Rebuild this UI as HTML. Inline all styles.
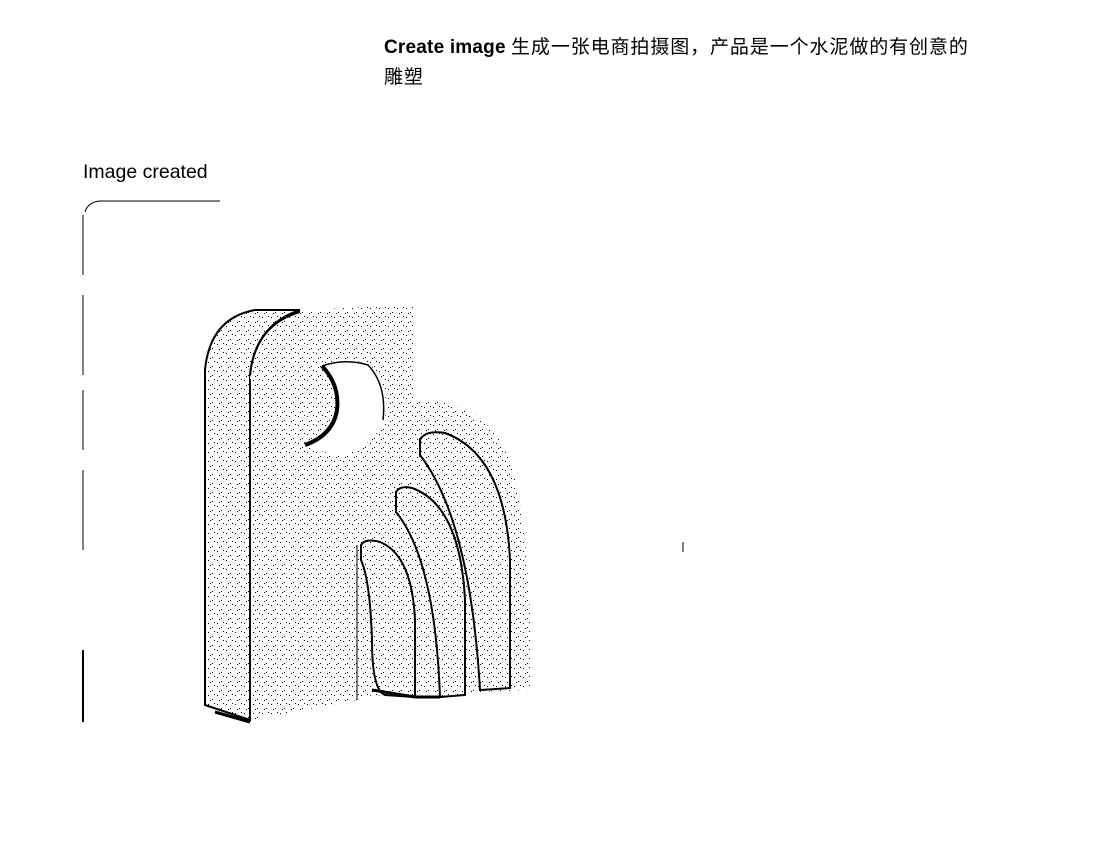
<!DOCTYPE html>
<html><head><meta charset="utf-8"><style>
html,body{margin:0;padding:0;background:#fff;width:1100px;height:859px;overflow:hidden;position:relative;font-family:"Liberation Sans","Noto Sans CJK SC",sans-serif;color:#000}
.q{position:absolute;left:384px;top:33px;font-size:19px;line-height:30px;width:660px}
.q b{font-weight:bold;letter-spacing:0.2px}
.q span{letter-spacing:0.9px}
.h{position:absolute;left:83px;top:159px;font-size:19.5px;line-height:26px}
svg{position:absolute;left:0;top:0}
</style></head><body>
<div class="q"><b>Create image</b> <span>生成一张电商拍摄图，产品是一个水泥做的有创意的</span><br><span>雕塑</span></div>
<div class="h">Image created</div>
<svg width="1100" height="859" viewBox="0 0 1100 859">
<defs>
<pattern id="d" width="9" height="9" patternUnits="userSpaceOnUse">
<rect width="9" height="9" fill="#fff"/>
<rect x="1" y="2" width="1" height="1" fill="#000"/>
<rect x="5" y="6" width="1" height="1" fill="#000"/>
<rect x="7" y="1" width="1" height="1" fill="#000"/>
<rect x="3" y="7" width="1" height="1" fill="#000"/>
</pattern>
</defs>
<g fill="none" stroke="#000" stroke-width="1">
<path d="M85 212 Q88 202 100 201 L220 201"/>
<path d="M83 215 L83 555" stroke-dasharray="60 20 80 15"/>
<path d="M83 650 L83 722" stroke-width="2"/>
<path d="M683 542 L683 552"/>
</g>
<path d="M250 370 Q255 320 300 310 L415 305 L415 400 Q480 400 505 450 Q530 500 532 690 L250 700 Z" fill="url(#d)"/>
<path d="M205 370 Q210 318 255 310 L300 310 Q255 325 250 375 L250 720 L205 705 Z" fill="url(#d)" stroke="#000" stroke-width="2"/>
<path d="M250 375 L250 720 L357 700 L357 540" fill="url(#d)"/>
<path d="M357 545 L357 700" stroke="#000" stroke-width="1" fill="none"/>
<path d="M250 375 Q255 325 300 312" fill="none" stroke="#000" stroke-width="2"/>
<path d="M250 380 L250 720" stroke="#000" stroke-width="2"/>
<path d="M215 712 L250 722 L240 718" stroke="#000" stroke-width="3" fill="none"/>
<path d="M322 366 Q345 355 370 365 Q390 385 385 420 Q370 450 340 455 Q310 450 305 445 Q335 430 338 400 Q337 378 322 366 Z" fill="#fff"/>
<path d="M322 366 Q340 385 337 410 Q333 435 305 445" fill="none" stroke="#000" stroke-width="4"/>
<path d="M322 366 Q345 358 368 365 Q387 385 383 420" fill="none" stroke="#000" stroke-width="1.5"/>
<path d="M420 440 Q425 430 445 433 Q505 455 510 560 L510 688 L480 690 Q470 520 420 455 Z" fill="url(#d)" stroke="#000" stroke-width="2"/>
<path d="M396 492 Q400 485 412 488 Q460 505 465 600 L465 695 L440 697 Q435 560 396 512 Z" fill="url(#d)" stroke="#000" stroke-width="2"/>
<path d="M361 545 Q365 538 380 542 Q412 555 415 620 L415 697 L385 695 Q372 690 372 640 Q370 580 361 560 Z" fill="url(#d)" stroke="#000" stroke-width="2"/>
<path d="M372 690 L415 697 L440 697" fill="none" stroke="#000" stroke-width="3"/>
</svg>
</body></html>
